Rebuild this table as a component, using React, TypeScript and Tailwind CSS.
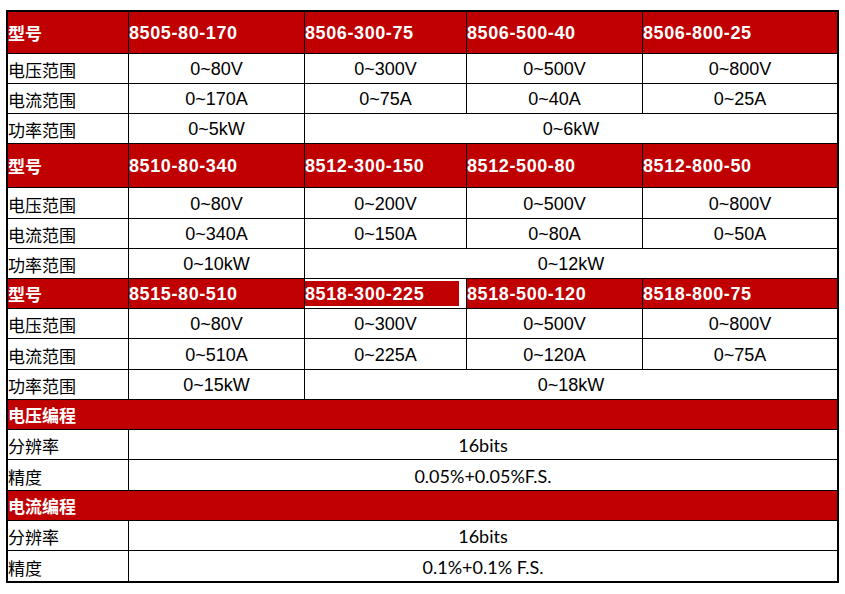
import React from "react";

type Block = {
  models: string[];
  volt: string[];
  amp: string[];
  power: [string, string];
};

const blocks: Block[] = [
  {
    models: ["8505-80-170", "8506-300-75", "8506-500-40", "8506-800-25"],
    volt: ["0~80V", "0~300V", "0~500V", "0~800V"],
    amp: ["0~170A", "0~75A", "0~40A", "0~25A"],
    power: ["0~5kW", "0~6kW"],
  },
  {
    models: ["8510-80-340", "8512-300-150", "8512-500-80", "8512-800-50"],
    volt: ["0~80V", "0~200V", "0~500V", "0~800V"],
    amp: ["0~340A", "0~150A", "0~80A", "0~50A"],
    power: ["0~10kW", "0~12kW"],
  },
  {
    models: ["8515-80-510", "8518-300-225", "8518-500-120", "8518-800-75"],
    volt: ["0~80V", "0~300V", "0~500V", "0~800V"],
    amp: ["0~510A", "0~225A", "0~120A", "0~75A"],
    power: ["0~15kW", "0~18kW"],
  },
];

const cjk = "font-['Noto_Sans_CJK_SC',sans-serif]";
const latin = "font-['Liberation_Sans','Noto_Sans_CJK_SC',sans-serif]";

function HeadLabel({ text, span }: { text: string; span?: boolean }) {
  return (
    <div
      className={`bg-[#c00000] text-white font-bold text-[17px] leading-none flex items-center ${cjk} ${
        span ? "col-span-5" : ""
      }`}
    >
      {text}
    </div>
  );
}

function Model({ text, selected }: { text: string; selected?: boolean }) {
  if (selected) {
    // cell with the spreadsheet-style selection frame
    return (
      <div className="bg-white pt-[2px] pb-[2px] pr-[7px]">
        <div
          className={`bg-[#c00000] h-full text-white font-bold text-[18px] tracking-[0.6px] leading-none flex items-center ${latin}`}
        >
          {text}
        </div>
      </div>
    );
  }
  return (
    <div
      className={`bg-[#c00000] text-white font-bold text-[18px] tracking-[0.6px] leading-none flex items-center ${latin}`}
    >
      {text}
    </div>
  );
}

function Label({ text }: { text: string }) {
  return (
    <div className={`bg-white text-black text-[17px] leading-none flex items-center pt-[2px] ${cjk}`}>
      {text}
    </div>
  );
}

function Value({ text, wide }: { text: string; wide?: boolean }) {
  return (
    <div
      className={`bg-white text-black text-[18px] leading-none flex items-center justify-center pt-[1px] ${latin} ${
        wide ? "col-span-3" : ""
      }`}
    >
      {text}
    </div>
  );
}

function Prog({ text }: { text: string }) {
  return (
    <div
      className="bg-white text-black text-[18px] leading-none flex items-center justify-center col-span-4 pt-[1px] font-['Lato',sans-serif]"
    >
      {text}
    </div>
  );
}

export default function App() {
  return (
    <div className="bg-white w-[845px] h-[594px] pt-[10px] pl-[6px]">
      <div className="w-fit border-2 border-black bg-black grid gap-px grid-cols-[120px_175px_161px_175px_194px] grid-rows-[41px_29px_29px_29px_43px_30px_29px_29px_29px_29px_30px_29px_29px_29px_30px_29px_29px_30px]">
        {blocks.map((b, bi) => (
          <React.Fragment key={bi}>
            <HeadLabel text="型号" />
            {b.models.map((m, i) => (
              <Model key={m} text={m} selected={bi === 2 && i === 1} />
            ))}
            <Label text="电压范围" />
            {b.volt.map((v, i) => (
              <Value key={i} text={v} />
            ))}
            <Label text="电流范围" />
            {b.amp.map((v, i) => (
              <Value key={i} text={v} />
            ))}
            <Label text="功率范围" />
            <Value text={b.power[0]} />
            <Value text={b.power[1]} wide />
          </React.Fragment>
        ))}

        {/* programming accuracy */}
        <HeadLabel text="电压编程" span />
        <Label text="分辨率" />
        <Prog text="16bits" />
        <Label text="精度" />
        <Prog text="0.05%+0.05%F.S." />

        <HeadLabel text="电流编程" span />
        <Label text="分辨率" />
        <Prog text="16bits" />
        <Label text="精度" />
        <Prog text="0.1%+0.1% F.S." />
      </div>
    </div>
  );
}
